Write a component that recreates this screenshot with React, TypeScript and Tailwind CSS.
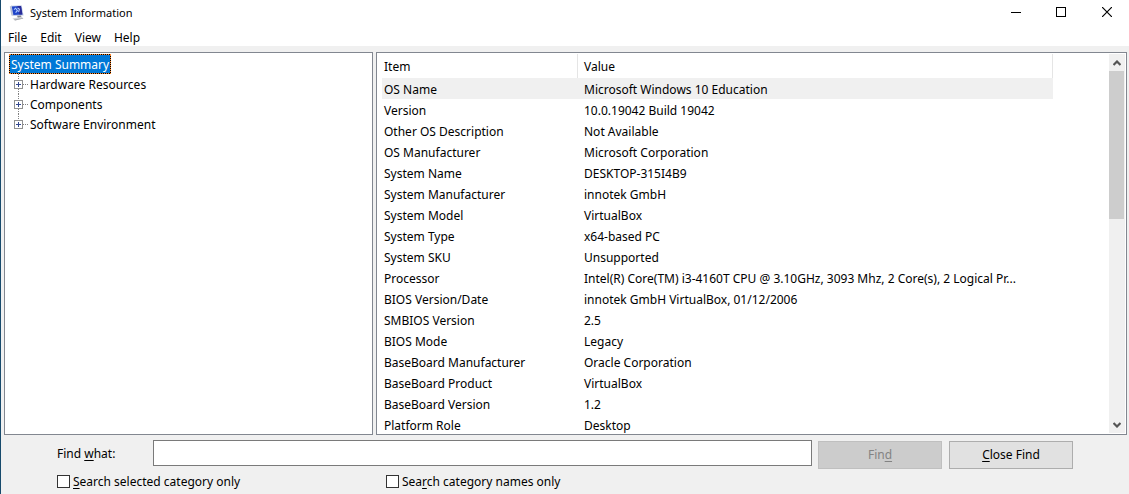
import React, { useState } from "react";

const rows: [string, string][] = [
  ["OS Name", "Microsoft Windows 10 Education"],
  ["Version", "10.0.19042 Build 19042"],
  ["Other OS Description", "Not Available"],
  ["OS Manufacturer", "Microsoft Corporation"],
  ["System Name", "DESKTOP-315I4B9"],
  ["System Manufacturer", "innotek GmbH"],
  ["System Model", "VirtualBox"],
  ["System Type", "x64-based PC"],
  ["System SKU", "Unsupported"],
  ["Processor", "Intel(R) Core(TM) i3-4160T CPU @ 3.10GHz, 3093 Mhz, 2 Core(s), 2 Logical Pr..."],
  ["BIOS Version/Date", "innotek GmbH VirtualBox, 01/12/2006"],
  ["SMBIOS Version", "2.5"],
  ["BIOS Mode", "Legacy"],
  ["BaseBoard Manufacturer", "Oracle Corporation"],
  ["BaseBoard Product", "VirtualBox"],
  ["BaseBoard Version", "1.2"],
  ["Platform Role", "Desktop"],
];

const branches = ["Hardware Resources", "Components", "Software Environment"];

function AppIcon() {
  return (
    <svg width="16" height="16" viewBox="0 0 16 16" aria-hidden="true">
      <path d="M0.8 1.6 L3 0.6 L4.4 10.8 L2.4 10.6 Z" fill="#b9c0d2" />
      <path d="M2.2 0.8 L12.6 0.2 L14.6 10.4 L4 11 Z" fill="#c3cbe4" />
      <path d="M2.8 1.4 L12 0.9 L13.4 9.4 L4.4 10.1 Z" fill="#1f45c8" />
      <path d="M8.4 1.1 L12 0.9 L13.4 9.4 L10.4 9.6 Z" fill="#2b2c98" />
      <path d="M5 4.6 L6.6 3.2 L8.4 5.6 L6.6 7.6 M8.6 3 L10.4 4.2 L9.6 7.2" stroke="#b4ccff" strokeWidth="1.1" fill="none" />
      <path d="M8 10.8 L12 10.6 L12.6 12.8 L9 13.2 Z" fill="#85888f" />
      <path d="M3.4 13.4 L12.6 11.8 L14.4 13.4 L6 15.6 Z" fill="#cfd1d7" />
      <path d="M5 14.6 L13.8 13 L14.4 13.4 L6 15.6 Z" fill="#a6a8ae" />
    </svg>
  );
}

function Key({ children }: { children: React.ReactNode }) {
  return <span className="underline underline-offset-2">{children}</span>;
}

function Expander({ last }: { last: boolean }) {
  return (
    <svg width="14" height="20" viewBox="0 0 14 20" shapeRendering="crispEdges" aria-hidden="true">
      <path d={last ? "M4.5 0V6M9 10.5H14" : "M4.5 0V6M4.5 15V20M9 10.5H14"} stroke="#808080" strokeDasharray="1 1" fill="none" />
      <rect x="0.5" y="6.5" width="8" height="8" fill="#fff" stroke="#919191" />
      <path d="M2 10.5H7M4.5 8V13" stroke="#34488f" />
    </svg>
  );
}

function Chevron({ down = false }: { down?: boolean }) {
  return (
    <svg width="8" height="6" viewBox="0 0 8 6" aria-hidden="true">
      <path d={down ? "M0.5 1L4 4.5L7.5 1" : "M0.5 5L4 1.5L7.5 5"} fill="none" stroke="#555" strokeWidth="2.2" />
    </svg>
  );
}

export default function App() {
  const [query, setQuery] = useState("");
  return (
    <div className="flex h-screen flex-col overflow-hidden border-l border-[#174a6c] bg-[#f0f0f0] font-['Noto_Sans',sans-serif] text-xs text-black">
      <header className="bg-white">
        <div className="flex h-[26px] items-start justify-between">
          <div className="flex items-center gap-1 pt-1 pl-2">
            <AppIcon />
            <h1 className="pt-px pl-px text-[11px] leading-4">System Information</h1>
          </div>
          <div className="-mr-px flex">
            <button aria-label="Minimize" className="flex h-6 w-[45px] items-center justify-center">
              <svg width="10" height="10" shapeRendering="crispEdges"><path d="M0 5.5H10" stroke="#000" /></svg>
            </button>
            <button aria-label="Maximize" className="flex h-6 w-[46px] items-center justify-center">
              <svg width="10" height="10" shapeRendering="crispEdges"><rect x="0.5" y="0.5" width="9" height="9" fill="none" stroke="#000" /></svg>
            </button>
            <button aria-label="Close" className="flex h-6 w-[46px] items-center justify-center">
              <svg width="10" height="10"><path d="M0 0L10 10M10 0L0 10" stroke="#000" strokeWidth="1.2" /></svg>
            </button>
          </div>
        </div>
        <nav className="flex h-5 items-end gap-[13px] pl-[7px]">
          <button>File</button>
          <button>Edit</button>
          <button>View</button>
          <button>Help</button>
        </nav>
      </header>

      <main className="flex min-h-0 flex-1 gap-[3px] pt-[6px] pr-[2px] pl-[3px]">
        <div className="w-[369px] shrink-0 border border-[#828790] bg-white px-1 py-px">
          <ul role="tree">
            <li role="treeitem" aria-selected="true" className="flex h-5">
              <span className="border border-dotted border-[#ff8728] bg-black text-white">
                <span className="block bg-[#0078d7] px-px pt-[2px] leading-4">System Summary</span>
              </span>
            </li>
            {branches.map((b, i) => (
              <li key={b} role="treeitem" aria-selected="false" className="flex h-5 items-center gap-[2px] pl-[5px]">
                <Expander last={i === branches.length - 1} />
                <span className="pt-[2px] leading-4">{b}</span>
              </li>
            ))}
          </ul>
        </div>

        <div className="flex min-w-0 flex-1 border border-[#828790] bg-white p-px">
          <div className="min-w-0 flex-1 overflow-hidden pr-14">
            <table className="w-full table-fixed border-separate border-spacing-0 text-left">
              <colgroup>
                <col className="w-1" />
                <col className="w-[196px]" />
                <col />
              </colgroup>
              <thead>
                <tr className="h-6">
                  <td className="p-0" />
                  <th className="border-r border-[#e5e5e5] p-0 pt-[2px] pl-[2px] font-normal">Item</th>
                  <th className="border-r border-[#e5e5e5] p-0 pt-[2px] pl-[6px] font-normal">Value</th>
                </tr>
              </thead>
              <tbody>
                {rows.map(([item, value], i) => (
                  <tr key={item} className="h-[21px]">
                    <td className="p-0" />
                    <td className={i === 0 ? "bg-[#f0f0f0] p-0 pt-[2px] pl-[2px]" : "p-0 pt-[2px] pl-[2px]"}>{item}</td>
                    <td className={i === 0 ? "truncate bg-[#f0f0f0] p-0 pt-[2px] pl-[6px]" : "truncate p-0 pt-[2px] pl-[6px]"}>{value}</td>
                  </tr>
                ))}
              </tbody>
            </table>
          </div>
          <div className="flex w-4 flex-col bg-[#f0f0f0]">
            <button aria-label="Scroll up" className="flex h-[17px] shrink-0 items-center justify-center"><Chevron /></button>
            <div className="min-h-0 flex-1 pr-px">
              <div className="h-[43%] bg-[#cdcdcd]" />
            </div>
            <button aria-label="Scroll down" className="flex h-[17px] shrink-0 items-center justify-center"><Chevron down /></button>
          </div>
        </div>
      </main>

      <form className="px-14 pt-[5px] pb-1" onSubmit={(e) => e.preventDefault()}>
        <div className="flex items-start">
          <label htmlFor="find" className="w-24 shrink-0 leading-7">Find <Key>w</Key>hat:</label>
          <input id="find" value={query} onChange={(e) => setQuery(e.target.value)} className="h-[26px] min-w-0 flex-1 border border-[#7a7a7a] bg-white px-1 outline-none" />
          <button disabled className="mt-px ml-[6px] h-7 w-[124px] border border-[#bfbfbf] bg-[#cccccc] text-[#838383]">Fin<Key>d</Key></button>
          <button type="button" className="mt-px ml-[7px] h-7 w-[124px] border border-[#adadad] bg-[#e1e1e1]"><Key>C</Key>lose Find</button>
        </div>
        <div className="flex pt-[3px]">
          <label className="flex w-[329px] items-center gap-[3px]">
            <input type="checkbox" className="size-[13px] appearance-none border border-[#333] bg-white checked:bg-[#0078d7]" />
            <span className="pt-[2px]"><Key>S</Key>earch selected category only</span>
          </label>
          <label className="flex items-center gap-[3px]">
            <input type="checkbox" className="size-[13px] appearance-none border border-[#333] bg-white checked:bg-[#0078d7]" />
            <span className="pt-[2px]">Sea<Key>r</Key>ch category names only</span>
          </label>
        </div>
      </form>
    </div>
  );
}
